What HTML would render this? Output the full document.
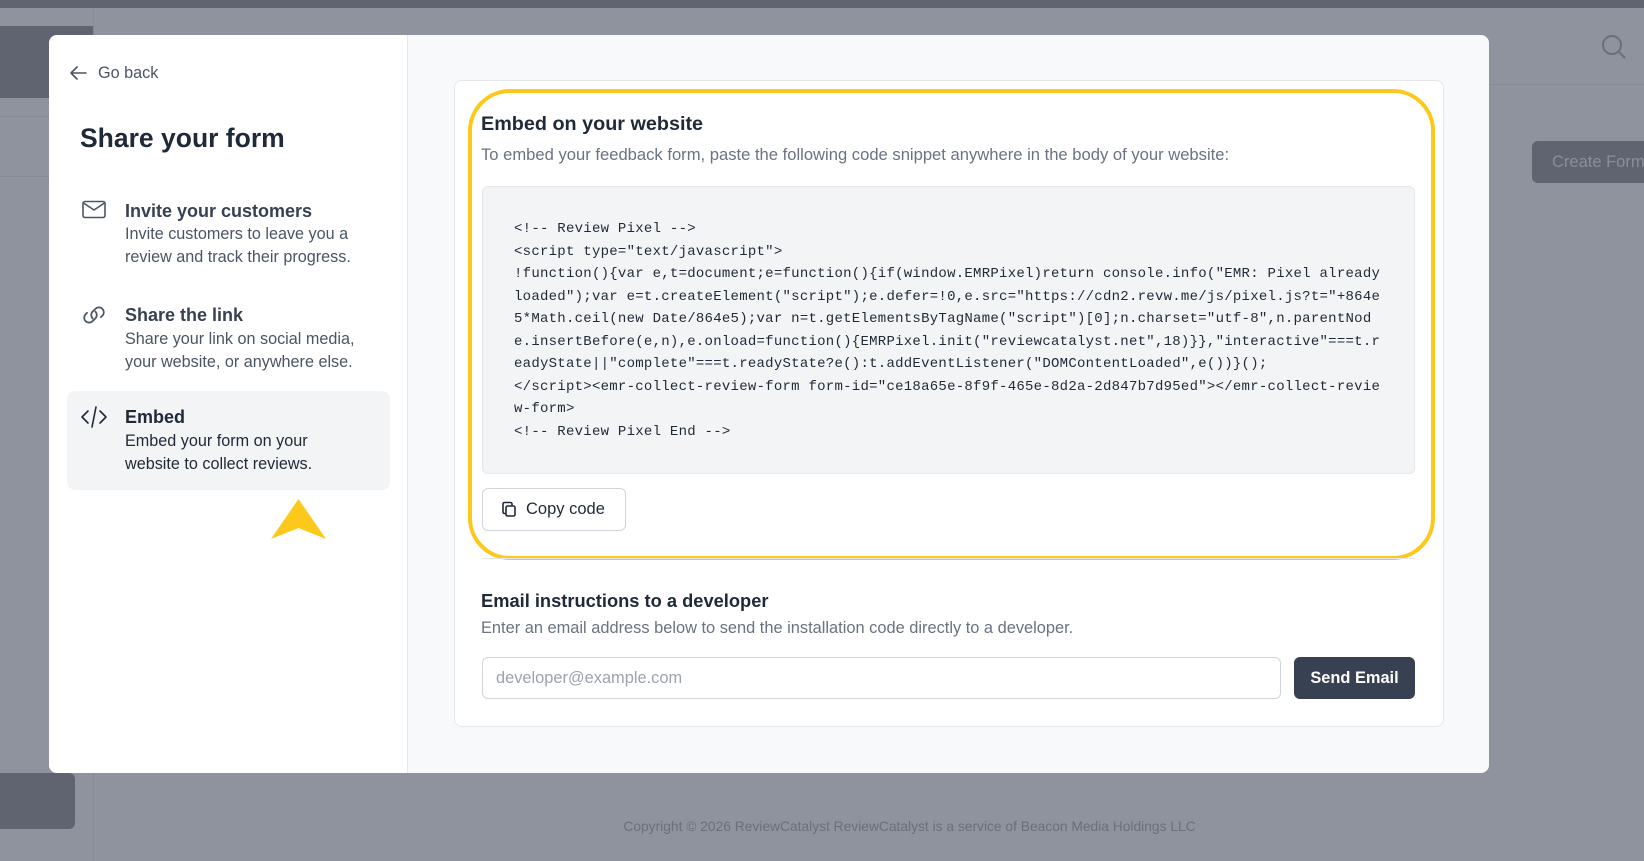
<!DOCTYPE html>
<html><head><meta charset="utf-8"><style>
*{box-sizing:border-box;margin:0;padding:0}
body{width:1644px;height:861px;overflow:hidden;background:#8f939d;font-family:"Liberation Sans",sans-serif;position:relative}
.abs{position:absolute}
.ic{position:absolute;fill:none;stroke:#4b5563;stroke-width:1.6;stroke-linecap:round;stroke-linejoin:round}
.h{position:absolute;font-size:18px;font-weight:600;color:#374151;white-space:nowrap}
.d{position:absolute;font-size:16.2px;color:#4b5563;line-height:22.5px;white-space:nowrap}
pre{font-family:"Liberation Mono",monospace;font-size:14px;line-height:22.5px;color:#1f2937;letter-spacing:0.26px}
</style></head><body>
<div class="abs" style="left:0;top:0;width:1644px;height:8px;background:#5f6470"></div>
<div class="abs" style="left:0;top:26px;width:93px;height:72px;background:#5f6470"></div>
<div class="abs" style="left:0;top:116px;width:93px;height:1px;background:#858993"></div>
<div class="abs" style="left:0;top:176px;width:93px;height:1px;background:#858993"></div>
<div class="abs" style="left:93px;top:8px;width:1px;height:853px;background:#868a94"></div>
<div class="abs" style="left:93px;top:84px;width:1551px;height:1px;background:#868a94"></div>
<div class="abs" style="left:0;top:773px;width:75px;height:56px;background:#5f6470;border-radius:0 6px 6px 0"></div>
<svg class="abs" style="left:1600px;top:33px" width="28" height="28" viewBox="0 0 28 28"><circle cx="12" cy="12" r="9" fill="none" stroke="#6b6f7a" stroke-width="2"/><path d="M19 19l6 6" stroke="#6b6f7a" stroke-width="2"/></svg>
<div class="abs" style="left:1532px;top:141px;width:130px;height:42px;background:#5f6470;border-radius:6px;color:#8a8e98;font-size:16.5px;line-height:42px;padding-left:20px">Create Form</div>
<div class="abs" style="left:0;width:1644px;top:819px;text-align:center;font-size:13.8px;color:#6b6f7a;padding-left:175px">Copyright © 2026 ReviewCatalyst ReviewCatalyst is a service of Beacon Media Holdings LLC</div>

<div class="abs" style="left:49px;top:35px;width:1440px;height:738px;background:#f8f9fb;border-radius:8px;overflow:hidden">
 <div class="abs" style="left:0;top:0;width:359px;height:738px;background:#fff;border-right:1px solid #e5e7eb"></div>
</div>
<!-- left panel -->
<svg class="ic" style="left:68px;top:64px" width="20" height="18" viewBox="0 0 20 18"><path d="M18 9H3M9 3L3 9l6 6"/></svg>
<div class="abs" style="left:98px;top:64px;font-size:16.2px;color:#4b5563">Go back</div>
<div class="abs" style="left:80px;top:123px;font-size:26.5px;font-weight:700;color:#1f2937">Share your form</div>

<svg class="ic" style="left:82px;top:200px" width="24" height="20" viewBox="0 0 24 20"><rect x="1" y="1.5" width="22" height="16" rx="2"/><path d="M1.5 3l10.5 7 10.5-7"/></svg>
<div class="h" style="left:125px;top:201px">Invite your customers</div>
<div class="d" style="left:125px;top:223px">Invite customers to leave you a<br>review and track their progress.</div>

<svg class="ic" style="left:81px;top:302px" width="26" height="26" viewBox="0 0 24 24"><path d="M13.2 8.8a4.5 4.5 0 0 1 0 6.4l-2.5 2.5a4.5 4.5 0 0 1-6.4-6.4l1.3-1.3"/><path d="M10.8 15.2a4.5 4.5 0 0 1 0-6.4l2.5-2.5a4.5 4.5 0 0 1 6.4 6.4l-1.3 1.3"/></svg>
<div class="h" style="left:125px;top:305px">Share the link</div>
<div class="d" style="left:125px;top:328px">Share your link on social media,<br>your website, or anywhere else.</div>

<div class="abs" style="left:67px;top:391px;width:323px;height:99px;background:#f3f4f6;border-radius:8px"></div>
<svg class="ic" style="left:80px;top:405px;stroke:#1f2937" width="28" height="24" viewBox="0 0 28 24"><path d="M8 6l-6 6 6 6M20 6l6 6-6 6M16 2l-4 20"/></svg>
<div class="h" style="left:125px;top:407px;color:#1f2937">Embed</div>
<div class="d" style="left:125px;top:430px;color:#1f2937">Embed your form on your<br>website to collect reviews.</div>
<svg class="abs" style="left:270px;top:499px" width="57" height="41" viewBox="0 0 57 41"><path d="M28.5 0L56 40 28.5 29 1 40z" fill="#fbc81b"/></svg>

<!-- right card -->
<div class="abs" style="left:454px;top:80px;width:990px;height:647px;background:#fff;border:1px solid #e5e7eb;border-radius:8px"></div>
<div class="abs" style="left:468px;top:89px;width:967px;height:471px;border:4px solid #fbc81b;border-radius:42px"></div>
<div class="abs" style="left:481px;top:113px;font-size:19.8px;font-weight:600;color:#1f2937">Embed on your website</div>
<div class="abs" style="left:481px;top:145px;font-size:16.6px;color:#6b7280">To embed your feedback form, paste the following code snippet anywhere in the body of your website:</div>
<div class="abs" style="left:482px;top:186px;width:933px;height:288px;background:#f3f4f6;border:1px solid #e5e7eb;border-radius:6px;padding:31px 0 0 31px">
<pre>&lt;!-- Review Pixel --&gt;
&lt;script type="text/javascript"&gt;
!function(){var e,t=document;e=function(){if(window.EMRPixel)return console.info("EMR: Pixel already
loaded");var e=t.createElement("script");e.defer=!0,e.src="https://cdn2.revw.me/js/pixel.js?t="+864e
5*Math.ceil(new Date/864e5);var n=t.getElementsByTagName("script")[0];n.charset="utf-8",n.parentNod
e.insertBefore(e,n),e.onload=function(){EMRPixel.init("reviewcatalyst.net",18)}},"interactive"===t.r
eadyState||"complete"===t.readyState?e():t.addEventListener("DOMContentLoaded",e())}();
&lt;/script&gt;&lt;emr-collect-review-form form-id="ce18a65e-8f9f-465e-8d2a-2d847b7d95ed"&gt;&lt;/emr-collect-revie
w-form&gt;
&lt;!-- Review Pixel End --&gt;</pre></div>
<div class="abs" style="left:482px;top:488px;width:144px;height:43px;background:#fff;border:1px solid #d1d5db;border-radius:6px;font-size:16.5px;color:#1f2937;line-height:41px;padding-left:43px">Copy code</div>
<svg class="ic" style="left:501px;top:501px;stroke:#1f2937" width="16" height="17" viewBox="0 0 16 17"><rect x="5" y="5" width="9" height="10" rx="1.5"/><path d="M11 4V3a1.5 1.5 0 0 0-1.5-1.5h-6A1.5 1.5 0 0 0 2 3v8a1.5 1.5 0 0 0 1.5 1.5H4"/></svg>
<div class="abs" style="left:482px;top:558px;width:933px;height:1px;background:#e5e7eb"></div>
<div class="abs" style="left:481px;top:590px;font-size:18.3px;font-weight:600;color:#1f2937">Email instructions to a developer</div>
<div class="abs" style="left:481px;top:619px;font-size:16.4px;color:#6b7280">Enter an email address below to send the installation code directly to a developer.</div>
<div class="abs" style="left:482px;top:657px;width:799px;height:42px;border:1px solid #d1d5db;border-radius:6px;font-size:16.4px;color:#9ca3af;line-height:41px;padding-left:13px">developer@example.com</div>
<div class="abs" style="left:1294px;top:657px;width:121px;height:42px;background:#374151;border-radius:6px;color:#fff;font-size:16.4px;font-weight:600;line-height:43px;text-align:center">Send Email</div>
</body></html>
